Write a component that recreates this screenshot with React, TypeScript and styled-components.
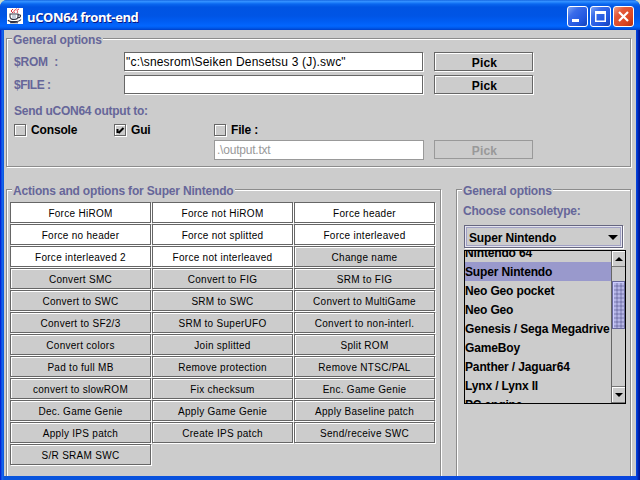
import React from "react";
import styled, { createGlobalStyle, css } from "styled-components";

const Global = createGlobalStyle`
  * { box-sizing: border-box; }
  body { margin: 0; overflow: hidden; background: #c8dccc; }
`;

const etched = (color: string) => css`
  border: 1px solid ${color};
  box-shadow: 1px 1px 0 #fff, inset 1px 1px 0 #fff;
`;

const Window = styled.div`
  width: 640px;
  height: 480px;
  display: flex;
  flex-direction: column;
  overflow: hidden;
  border-radius: 7px 7px 0 0;
  background: linear-gradient(90deg, #0019cf 0, #0831d9 1px, #166aee 2px, #0855dd 4px, #0845dd 636px, #0441d8 637px, #0028b8 638px, #00138c 640px);
  font: bold 12px "Liberation Sans", Arial, sans-serif;
  color: #000;
`;

const TitleBar = styled.header`
  height: 30px;
  flex: none;
  display: flex;
  align-items: center;
  padding: 0 6px 0 7px;
  background: linear-gradient(180deg, #0758d8 0, #3a93ff 1px, #2a8bff 2px, #0a67ef 4px, #0054e3 7px, #0055e5 16px, #005cf2 21px, #0266fe 26px, #0059ea 28px, #0040c8 30px);
`;

const Title = styled.h1`
  flex: 1;
  margin: 4px 0 0 4px;
  font: bold 13px "Open Sans", "Noto Sans", sans-serif;
  line-height: 18px;
  letter-spacing: -0.4px;
  color: #fff;
  text-shadow: 1px 1px 0 #0a1883;
`;

const JavaIcon = styled.svg`
  width: 16px;
  height: 16px;
  margin-top: 2px;
  background: #fff;
`;

const Controls = styled.div`
  display: flex;
  gap: 2px;
  margin-top: 3px;
`;

const Control = styled.button<{ $close?: boolean }>`
  width: 21px;
  height: 21px;
  padding: 0;
  display: flex;
  border: 1px solid #fff;
  border-radius: 3px;
  background: ${(p) =>
    p.$close
      ? "linear-gradient(135deg, #f0a088 0, #e4593a 30%, #dc4622 70%, #b83010 100%)"
      : "linear-gradient(135deg, #7ea4f4 0, #3a6cea 30%, #2257e0 70%, #1442b8 100%)"};
`;

const Client = styled.main`
  height: 446px;
  margin: 0 4px;
  padding: 8px 0 0 2px;
  background: #ccc;
  overflow: hidden;
`;

const Group = styled.section<{ $w: number; $h: number }>`
  width: ${(p) => p.$w}px;
  height: ${(p) => p.$h}px;
  ${etched("#8c8c8c")}
`;

const Legend = styled.h2`
  width: max-content;
  height: 14px;
  margin: -7px 0 0 5px;
  padding: 0 1px;
  background: #ccc;
  color: #666699;
  font-size: 12px;
  line-height: 16px;
  letter-spacing: -0.18px;
`;

const Lower = styled.div`
  display: flex;
  gap: 15px;
  margin-top: 22px;
`;

const Label = styled.div<{ $ls?: number }>`
  color: #666699;
  line-height: 16px;
  white-space: pre;
  letter-spacing: ${(p) => p.$ls ?? -0.2}px;
`;

const Form = styled.div`
  padding: 6px 0 0 7px;
`;

const FieldRow = styled.div`
  display: grid;
  grid-template-columns: 110px 299px 110px;
  height: 23px;
  align-items: start;
  & > ${Label} { padding-top: 2px; }
  & > :nth-child(3) { margin-left: 11px; }
`;

const TextField = styled.div<{ $disabled?: boolean }>`
  height: ${(p) => (p.$disabled ? 20 : 19)}px;
  padding-left: ${(p) => (p.$disabled ? 2 : 1)}px;
  line-height: 19px;
  font-weight: normal;
  white-space: pre;
  letter-spacing: ${(p) => (p.$disabled ? -0.22 : 0.19)}px;
  background: #fff;
  color: ${(p) => (p.$disabled ? "#999" : "#000")};
  border: 1px solid ${(p) => (p.$disabled ? "#999" : "#666")};
  box-shadow: ${(p) => (p.$disabled ? "none" : "1px 1px 0 #fff")};
`;

const PickButton = styled.button`
  width: 99px;
  height: 19px;
  padding: 2px 0 0 2px;
  font: inherit;
  line-height: 16px;
  letter-spacing: 0.2px;
  background: #ccc;
  color: #000;
  ${etched("#666")}
  &:disabled {
    color: #999;
    border-color: #999;
    box-shadow: none;
  }
`;

const OutputHeading = styled(Label)`
  margin-top: 5px;
`;

const CheckRow = styled.div`
  display: grid;
  grid-template-columns: 100px 100px 150px;
  margin-top: 5px;
`;

const CheckItem = styled.label`
  display: flex;
  align-items: center;
  gap: 5px;
  height: 13px;
  line-height: 13px;
  letter-spacing: -0.15px;
  white-space: pre;
`;

const Box = styled.span`
  width: 12px;
  height: 12px;
  margin-bottom: 1px;
  display: flex;
  ${etched("#666")}
`;

const OutputRow = styled.div`
  display: grid;
  grid-template-columns: 210px 99px;
  gap: 10px;
  padding: 3px 0 0 200px;
`;

const ActionGrid = styled.div`
  display: grid;
  grid-template-columns: repeat(3, 141px);
  grid-auto-rows: 21px;
  gap: 1px;
  padding: 5px 0 0 3px;
`;

const Action = styled.button<{ $on?: boolean }>`
  padding: 2px 0 0;
  font: 10px "Liberation Sans", Arial, sans-serif;
  letter-spacing: 0.28px;
  color: #000;
  background: ${(p) => (p.$on ? "#fff" : "#ccc")};
  ${etched("#666")}
`;

const Side = styled.div`
  padding: 6px 0 0 7px;
`;

const ComboLabel = styled(Label)`
  margin-left: -1px;
`;

const Combo = styled.div`
  width: 159px;
  height: 23px;
  margin-top: 6px;
  display: flex;
  align-items: center;
  justify-content: space-between;
  padding: 2px 4px 0;
  letter-spacing: -0.16px;
  border: 1px solid #666680;
  box-shadow: 1px 1px 0 #fff, inset 0 0 0 1px #e4e4ee, inset 0 0 0 2px #a0a0c4;
`;

const Popup = styled.div`
  width: 162px;
  height: 154px;
  margin-top: 2px;
  display: flex;
  border: 1px solid #000;
  overflow: hidden;
`;

const List = styled.ul`
  width: 146px;
  margin: -8px 0 0;
  padding: 0;
  list-style: none;
  overflow: hidden;
`;

const Item = styled.li<{ $selected?: boolean }>`
  height: 19px;
  line-height: 21px;
  white-space: nowrap;
  letter-spacing: -0.15px;
  background: ${(p) => (p.$selected ? "#9999cc" : "#ccc")};
`;

const Scrollbar = styled.div`
  flex: 1;
  display: flex;
  flex-direction: column;
  border-left: 1px solid #666;
  background: #ccc;
`;

const Arrow = styled.div`
  height: 16px;
  display: flex;
  align-items: center;
  justify-content: center;
  border-bottom: 1px solid #777;
  box-shadow: inset 1px 1px 0 #fff;
`;

const Thumb = styled.div`
  height: 48px;
  margin-top: 14px;
  border: 1px solid #666699;
  box-shadow: inset 1px 1px 0 #ccccff;
  background-color: #9999cc;
  background-image: radial-gradient(circle, #b8b8e8 0.7px, transparent 0.9px), radial-gradient(circle, #7474ac 0.6px, transparent 0.9px);
  background-size: 4px 4px;
  background-position: 0 0, 2px 2px;
`;

const Spring = styled.div`
  flex: 1;
  border-bottom: 1px solid #777;
`;

const actions = [
  "Force HiROM", "Force not HiROM", "Force header",
  "Force no header", "Force not splitted", "Force interleaved",
  "Force interleaved 2", "Force not interleaved", "Change name",
  "Convert SMC", "Convert to FIG", "SRM to FIG",
  "Convert to SWC", "SRM to SWC", "Convert to MultiGame",
  "Convert to SF2/3", "SRM to SuperUFO", "Convert to non-interl.",
  "Convert colors", "Join splitted", "Split ROM",
  "Pad to full MB", "Remove protection", "Remove NTSC/PAL",
  "convert to slowROM", "Fix checksum", "Enc. Game Genie",
  "Dec. Game Genie", "Apply Game Genie", "Apply Baseline patch",
  "Apply IPS patch", "Create IPS patch", "Send/receive SWC",
  "S/R SRAM SWC",
];

const consoles = [
  "Nintendo 64", "Super Nintendo", "Neo Geo pocket", "Neo Geo",
  "Genesis / Sega Megadrive", "GameBoy", "Panther / Jaguar64",
  "Lynx / Lynx II", "PC engine",
];

export default function App() {
  return (
    <>
      <Global />
      <Window>
        <TitleBar>
          <JavaIcon viewBox="0 0 16 16" fill="none">
            <path d="M9.5 0.5C10 2 5 2 7.5 5M12 1C8 2.500 12 3 10 5M6 1l-2 2 2 2" stroke="#d83040" />
            <path d="M3 6h8v2.500c0 2-1.500 3-4 3s-4-1-4-3zM11 7c4-1 3 3-.5 3" stroke="#334" strokeWidth="1.1" />
            <path d="M5 8h4M5 10h4" stroke="#8ba0bb" />
            <path d="M1 12c1 2.300 11 2.300 13-.5M3 14.800h8" stroke="#334" strokeWidth="1.1" />
          </JavaIcon>
          <Title>uCON64 front-end</Title>
          <Controls>
            <Control aria-label="Minimize">
              <svg width="19" height="19"><rect x="4" y="12" width="7" height="3" fill="#fff" /></svg>
            </Control>
            <Control aria-label="Maximize">
              <svg width="19" height="19"><path d="M4 4h11v11H4zM5.500 7v6.500h8V7z" fill="#fff" fillRule="evenodd" /></svg>
            </Control>
            <Control $close aria-label="Close">
              <svg width="19" height="19"><path d="M5 5l9 9M14 5l-9 9" stroke="#fff" strokeWidth="2.2" /></svg>
            </Control>
          </Controls>
        </TitleBar>
        <Client>
          <Group $w={625} $h={129}>
            <Legend>General options</Legend>
            <Form>
              <FieldRow>
                <Label>{"$ROM  :"}</Label>
                <TextField>{'"c:\\snesrom\\Seiken Densetsu 3 (J).swc"'}</TextField>
                <PickButton>Pick</PickButton>
              </FieldRow>
              <FieldRow>
                <Label $ls={-0.5}>{"$FILE :"}</Label>
                <TextField />
                <PickButton>Pick</PickButton>
              </FieldRow>
              <OutputHeading $ls={-0.25}>Send uCON64 output to:</OutputHeading>
              <CheckRow>
                <CheckItem><Box />Console</CheckItem>
                <CheckItem>
                  <Box>
                    <svg width="10" height="10"><path d="M2.500 4v4M3.500 8L8.500 3" stroke="#000" strokeWidth="2" fill="none" /></svg>
                  </Box>
                  Gui
                </CheckItem>
                <CheckItem><Box />File :</CheckItem>
              </CheckRow>
              <OutputRow>
                <TextField $disabled>.\output.txt</TextField>
                <PickButton disabled>Pick</PickButton>
              </OutputRow>
            </Form>
          </Group>
          <Lower>
            <Group $w={435} $h={310}>
              <Legend>Actions and options for Super Nintendo</Legend>
              <ActionGrid>
                {actions.map((a, i) => (
                  <Action key={a} $on={i < 8}>{a}</Action>
                ))}
              </ActionGrid>
            </Group>
            <Group $w={175} $h={310}>
              <Legend>General options</Legend>
              <Side>
                <ComboLabel>Choose consoletype:</ComboLabel>
                <Combo>
                  <span>Super Nintendo</span>
                  <svg width="10" height="5"><path d="M0 0h10L5 5z" /></svg>
                </Combo>
                <Popup>
                  <List>
                    {consoles.map((c) => (
                      <Item key={c} $selected={c === "Super Nintendo"}>{c}</Item>
                    ))}
                  </List>
                  <Scrollbar>
                    <Arrow><svg width="8" height="4"><path d="M4 0l4 4H0z" /></svg></Arrow>
                    <Thumb />
                    <Spring />
                    <Arrow><svg width="8" height="4"><path d="M0 0h8L4 4z" /></svg></Arrow>
                  </Scrollbar>
                </Popup>
              </Side>
            </Group>
          </Lower>
        </Client>
      </Window>
    </>
  );
}
